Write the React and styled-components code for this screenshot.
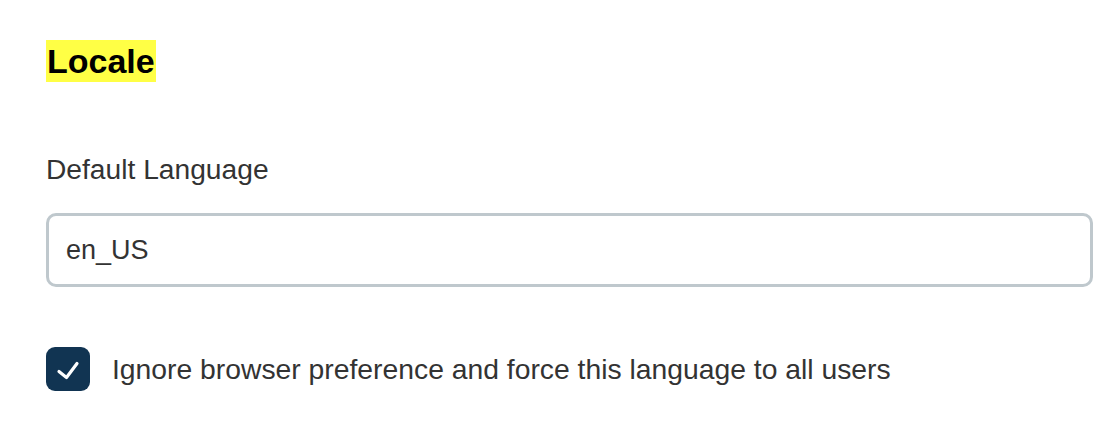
import React from 'react';
import styled, { createGlobalStyle } from 'styled-components';

const GlobalStyle = createGlobalStyle`
  body {
    margin: 0;
    background: #ffffff;
    font-family: 'Liberation Sans', Arial, sans-serif;
  }
`;

const Page = styled.div`
  display: flex;
  flex-direction: column;
  align-items: flex-start;
  padding: 40px 17px 0 46px;
`;

const Heading = styled.h2`
  margin: 0;
  background: #ffff45;
  color: #000;
  font-size: 34px;
  line-height: 42px;
  font-weight: 700;
  padding: 0 1px;
`;

const Label = styled.label`
  margin-top: 70px;
  font-size: 28.2px;
  line-height: 34px;
  color: #333;
`;

const TextInput = styled.input`
  box-sizing: border-box;
  margin-top: 27px;
  width: 100%;
  height: 74px;
  border: 3px solid #bfc8cd;
  border-radius: 10px;
  padding: 0 17px;
  font-family: inherit;
  font-size: 27px;
  color: #333;
  outline: none;
  background: #fff;
`;

const CheckRow = styled.label`
  display: flex;
  align-items: center;
  gap: 22px;
  margin-top: 60px;
  font-size: 28.3px;
  color: #333;
`;

const CheckBox = styled.span`
  display: flex;
  align-items: center;
  justify-content: center;
  flex-shrink: 0;
  width: 44px;
  height: 44px;
  border-radius: 9px;
  background: ${p => (p.checked ? '#113452' : '#fff')};
`;

export default function App() {
  return (
    <>
      <GlobalStyle />
      <Page>
        <Heading>Locale</Heading>
        <Label htmlFor="lang">Default Language</Label>
        <TextInput id="lang" defaultValue="en_US" />
        <CheckRow>
          <CheckBox checked>
            <svg width="44" height="44" viewBox="0 0 44 44" fill="none">
              <path d="M13 24.5 L20.5 30.5 L31 16.5" stroke="#fff" strokeWidth="3.2" strokeLinecap="round" strokeLinejoin="round" />
            </svg>
          </CheckBox>
          Ignore browser preference and force this language to all users
        </CheckRow>
      </Page>
    </>
  );
}
